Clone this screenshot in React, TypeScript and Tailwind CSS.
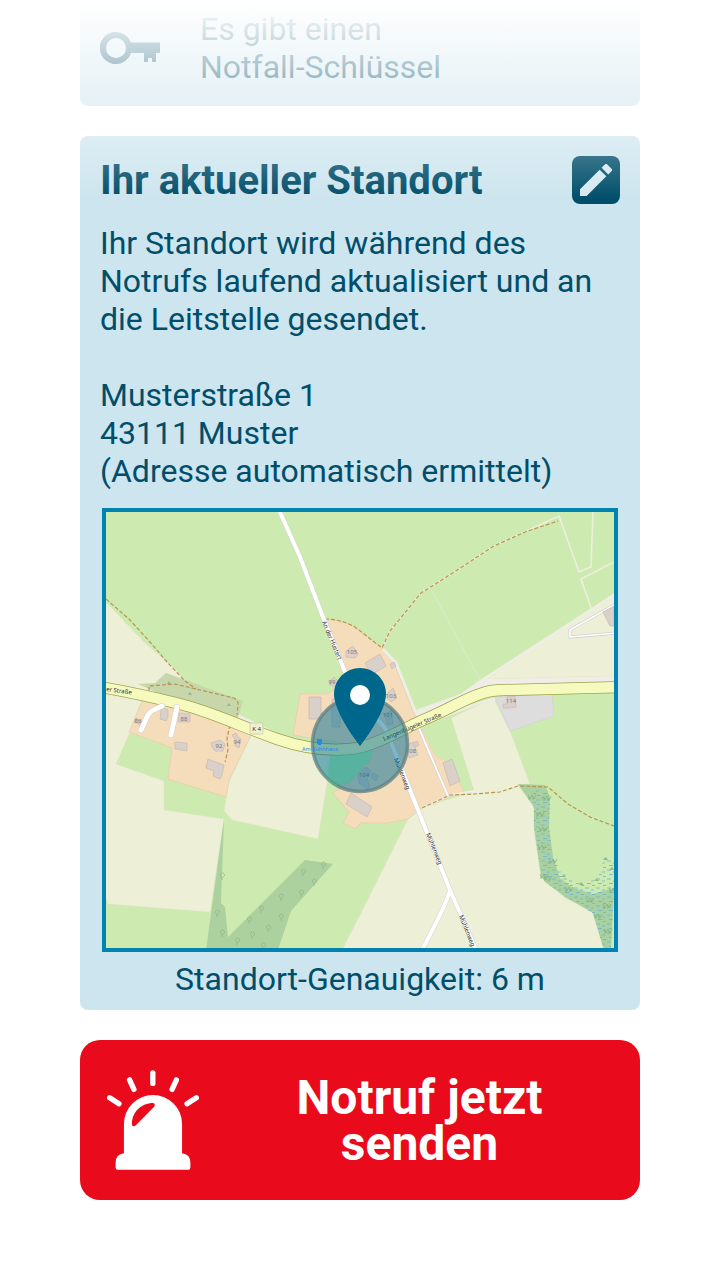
const KeyIcon = () => (
  <svg viewBox="0 0 60 32" className="w-[60px] h-8 shrink-0 fill-[#004e6a]" aria-hidden="true">
    <path
      fillRule="evenodd"
      d="M16 0a16 16 0 0 1 15 10.500H60V21h-4v9h-4v-4h-4v4h-4v-9H31A16 16 0 1 1 16 0zM16 6a10 10 0 1 0 0 20a10 10 0 0 0 0-20z"
    />
  </svg>
);

const PencilIcon = () => (
  <svg viewBox="3 3 18 18" className="size-8 fill-[#d5e8f0]" aria-hidden="true">
    <path d="M3 17.250V21h3.750L17.810 9.940l-3.750-3.750L3 17.250zM20.710 7.040a1 1 0 0 0 0-1.410l-2.340-2.340a1 1 0 0 0-1.410 0l-1.830 1.830 3.750 3.750 1.830-1.830z" />
  </svg>
);

const SirenIcon = () => (
  <svg viewBox="81 120 277 300" className="w-[92px] h-[100px] shrink-0" aria-hidden="true">
    <path
      fill="#fff"
      fillRule="evenodd"
      d="M132 370V282a87.500 87.500 0 0 1 175 0V370q25 3 25 28v16q0 6-6 6H113q-6 0-6-6v-16q0-25 25-28zM156 283q0 7 7 6l5-3 55-56q5-8-3-11C185 219 156 245 156 283z"
    />
    <path
      stroke="#fff"
      strokeWidth="16"
      strokeLinecap="round"
      d="M219 128V160M149 149L162 178M290 149L277 178M89 203L117 221M350 203L322 221"
    />
  </svg>
);

const buildings = [
  'M64 208l4 2 0 7-2 4-6-2 1-9z',
  'M79 213l11 1 0 8-12 0z',
  'M75 242l12 1 0 8-12-2z',
  'M111 243l9-3 5 4-2 7-8 0-3-4z',
  'M108 259l16 6-2 10-2 4-7-3 1-5-8-3z',
  'M132 235l4-2 2 4 3 2-2 9-4-2 1-5z',
  'M36 218l6 3-2 4-6-3z',
  'M209 197h12v22h-12z',
  'M232 199h8v28h-8z',
  'M230 181l4-4 4 4-3 6-5-2z',
  'M246 151l7-5 5 8-3 4-9-1z',
  'M265 163l15-9 6 12-15 9z',
  'M290 164l4-2 2 4-4 3z',
  'M285 196l8-8 4 10-6 4z',
  'M285 214l6-4 2 14-6 1z',
  'M307 245l6-3 4 10 1 3-9 3z',
  'M313 243l4-2 2 4-4 2z',
  'M343 263l9-4 8 22-10 5z',
  'M251 293l21 14-5 10-21-13z',
  'M258 275l8-8 5 4-4 8 3 7-3 3-8-6z',
  'M273 273l5 3-2 5-5-4z',
  'M407 197l8-1 1 11-8 1-5 0 0-4 4 0z',
  'M503 112l11-6v20l-4 0z',
];

const houseNumbers = [
  { n: '105', x: 252, y: 154 },
  { n: '99', x: 232, y: 184 },
  { n: '103', x: 291, y: 198 },
  { n: '101', x: 288, y: 217 },
  { n: '108', x: 311, y: 253 },
  { n: '104', x: 264, y: 277 },
  { n: '114', x: 411, y: 203 },
  { n: '86', x: 38, y: 223 },
  { n: '88', x: 84, y: 221 },
  { n: '92', x: 119, y: 248 },
  { n: '94', x: 137, y: 244 },
];

const trees = [
  [117, 413], [122, 433], [137, 441], [149, 420], [152, 435], [161, 409], [168, 428],
  [181, 397], [181, 417], [201, 393], [203, 372], [214, 382], [223, 365], [163, 446], [122, 376],
];

const shrubs = [
  [431, 297], [446, 298], [439, 314], [442, 329], [441, 347], [452, 361], [443, 376], [447, 378],
  [468, 389], [489, 400], [506, 406], [497, 416], [507, 431], [512, 390],
];

const MAIN_ROAD = 'M0 187C30 192 52 197 80 204C112 212 140 226 177 239C203 248 232 252 258 248C284 242 305 227 330 217C353 207 364 199 383 193Q392 190 404 190L520 187';
const SIDE_ROADS = 'M179 10L200 57L223 117L245 172L278 220Q288 230 290 240L310 290L350 390L376 450M350 390Q347 403 322 450';
const DRIVEWAYS = 'M62 206Q50 211 48 215L41 230M77 207L71 235';

const LocationMap = () => (
  <svg
    viewBox="6 12 508 436"
    className="block w-full h-auto"
    role="img"
    aria-label="Karte Ihres Standorts"
    fontFamily='"Noto Sans", sans-serif'
  >
    <defs>
      <pattern id="marsh" width="11" height="9" patternUnits="userSpaceOnUse">
        <path d="M1 1h4M7 3h3M3 5.500h4M8 7.500h3" stroke="#6db4d0" strokeWidth="0.8" />
      </pattern>
    </defs>

    {/* Land use */}
    <rect x="6" y="12" width="508" height="436" fill="#cdebb0" />
    <g fill="#edf0d6" stroke="#dfe2c8" strokeWidth="0.5">
      <path d="M6 102L45 143L72 166L90 185L70 200L0 185z" />
      <path d="M0 190L42 201L30 232L16 264L64 281V310L124 319L110 412L8 404L0 380z" />
      <path d="M152 233L180 242L231 252L227 283L218 339L132 320L124 311L129 281z" />
      <path d="M351 218L382 203L395 201L410 231L430 284L418 285L434 307V330L441 377L465 398L492 411L504 450H242L260 415L308 319L322 308L374 291z" />
      <path d="M387 179L516 92V176z" />
    </g>
    <path d="M6 181L50 191L90 204L138 214L175 232L193 238L180 242L80 210L6 193z" fill="#f0ede6" />
    <path d="M313 211L360 194L380 180L516 92V95L387 179L516 176V183L400 190L330 217L395 197V201L382 203L318 228z" fill="#f0ede6" />
    <g fill="#f5dcba" stroke="#e5c4a2" strokeWidth="0.5">
      <path d="M42 201L29 232L72 248L68 279L126 297L129 281L152 233L110 214z" />
      <path d="M225 119Q240 119 255 127L282 148Q290 154 296 168L313 211L322 228L335 255L348 262L364 291L322 308L308 319L288 323H260L256 329L243 323L249 312L233 293L250 282L270 260L272 248L193 235L200 194H227L238 187L243 174z" />
    </g>
    <path d="M322 228L335 255L348 262L364 291L374 291L351 218z" fill="#cdebb0" />
    <path d="M283 149L296 163L315 211" fill="none" stroke="#f0ede6" strokeWidth="3" />
    <path d="M38 184L55 183L66 173L143 201L138 218Q90 202 58 193z" fill="#c8d7ab" />
    <path d="M395 197L452 194L454 216L410 231z" fill="#dedddd" stroke="#d0cbd0" strokeWidth="0.5" />
    <path d="M124 319L106 450H178L191 411L233 364L205 360L128 437L125 407L121 403z" fill="#add19e" />
    <path d="M418 284L445 285L450 298L449 327L453 357L460 378L473 388L493 394L514 388L511 450H504L493 413L467 398L445 382L441 375L434 327V307z" fill="#a9d0a0" />
    <path d="M433 290L448 291L450 298L449 327L453 357L461 372L480 384L498 378L504 358L516 359L511 450H504L493 413L467 398L445 382L441 375L434 327z" fill="url(#marsh)" />

    {/* Trees and shrubs */}
    <g fill="none" stroke="#8db584" strokeWidth="0.8">
      {trees.map(([x, y]) => (
        <path key={`${x}-${y}`} d={`M${x} ${y + 4}v-3a2 2 0 1 1 1 0`} />
      ))}
    </g>
    <g fill="none" stroke="#83b582" strokeWidth="0.8">
      {shrubs.map(([x, y]) => (
        <path key={`${x}-${y}`} d={`M${x - 3} ${y - 2}l2 4 2-4 2 4 2-4M${x - 2} ${y + 3}v-3M${x + 2} ${y + 3}v-3`} />
      ))}
    </g>
    <path d="M67 184l2-3 2 3zM88 195l2-3 2 3zM127 206l2-3 2 3zM461 377l3-3 2 3zM479 385l2-3 3 3zM494 381l3-3 2 3zM503 360l3-3 2 3zM509 370l3-3 2 3z" fill="#96b886" />

    {/* Field boundaries */}
    <path d="M282 148L290 131L322 92L345 78L394 46L459 16L479 72L491 67L493 12M514 62L481 79L491 108" fill="none" stroke="#efeee3" strokeWidth="1.500" />
    <path d="M330 87L380 180" stroke="#dceccb" strokeWidth="1" />
    <path d="M516 104L470 130V137L516 133" fill="none" stroke="#d3d0d3" strokeWidth="3" />
    <path d="M516 104L470 130V137L516 133" fill="none" stroke="#fff" strokeWidth="1.500" />

    {/* Tracks */}
    <path d="M322 308L350 295L374 291" fill="none" stroke="#f1eee3" strokeWidth="2" />
    <g fill="none" stroke="#b9954b" strokeWidth="1.200" strokeDasharray="4 2">
      <path d="M6 99L30 120L50 142L67 162L85 181L96 189" />
      <path d="M49 191V186L75 184L96 189L134 198Q139 201 138 206L137 215M130 225L127 238L128 250L125 262" />
      <path d="M225 119Q240 119 255 127L282 148L290 131L321 93L345 78L394 46L425 32L458 21" />
      <path d="M322 308L350 295L374 294L400 292L418 286L448 287L468 304L490 317L514 326" />
    </g>

    {/* Buildings */}
    <g fill="#d9d0c9" stroke="#c3b5ab" strokeWidth="0.6">
      {buildings.map((d) => (
        <path key={d} d={d} />
      ))}
    </g>

    {/* Roads */}
    <g fill="none">
      <path d="M318 226L348 296" stroke="#cbc8c4" strokeWidth="3" />
      <path d="M318 226L348 296" stroke="#fff" strokeWidth="2" />
      <path d={SIDE_ROADS} stroke="#d3d2cb" strokeWidth="5" />
      <path d={SIDE_ROADS} stroke="#fff" strokeWidth="4" />
      <path d={MAIN_ROAD} stroke="#9da44b" strokeWidth="12" />
      <path d={MAIN_ROAD} stroke="#f7fabf" strokeWidth="10.500" />
      <path d={DRIVEWAYS} stroke="#d6cfc6" strokeWidth="6" strokeLinecap="round" />
      <path d={DRIVEWAYS} stroke="#fff" strokeWidth="5" strokeLinecap="round" />
    </g>

    {/* Labels */}
    <g fontSize="6" fill="#7d7674" textAnchor="middle">
      {houseNumbers.map(({ n, x, y }) => (
        <text key={n} x={x} y={y}>{n}</text>
      ))}
    </g>
    <g fontSize="6" fill="#2c2c2c">
      <text transform="translate(6 191) rotate(8)">er Straße</text>
      <text transform="translate(222 122) rotate(67)">An der Hustert</text>
      <text transform="translate(284 241) rotate(-23)">Langenbügeler Straße</text>
      <text transform="translate(294 259) rotate(68)">Mühlenweg</text>
      <text transform="translate(326 334) rotate(68)">Mühlenweg</text>
      <text transform="translate(359 416) rotate(68)">Mühlenweg</text>
    </g>
    <rect x="150" y="223" width="13" height="11" rx="1" fill="#f0f0d0" stroke="#c9c9a5" strokeWidth="0.8" />
    <text x="156.500" y="231" fontSize="6" fill="#333" textAnchor="middle">K 4</text>

    {/* Accuracy radius and pin */}
    <circle cx="260" cy="244" r="47.500" fill="#006b94" fillOpacity="0.5" stroke="#5f8080" strokeOpacity="0.75" strokeWidth="3.500" />
    <path d="M230 255L255 253L272 250L270 260L250 282L233 286L224 274z" fill="#3cc49a" fillOpacity="0.35" />
    <g fill="#2d86e0">
      <path d="M217 239h5v5h-1v1h-3v-1h-1z" />
      <text x="220" y="251" fontSize="5.500" textAnchor="middle">Am Kuhnhaus</text>
    </g>
    <path
      fill="#00678c"
      fillRule="evenodd"
      d="M260 168c-14.400 0-26 11.600-26 26c0 19.500 26 52 26 52s26-32.500 26-52c0-14.400-11.600-26-26-26z"
    />
    <circle cx="260" cy="195" r="10" fill="#fff" />
  </svg>
);

const App = () => {
  return (
    <div className="relative bg-white px-20 pb-20 font-[Roboto,sans-serif] text-[#004e6a]">
      <main className="flex flex-col gap-[30px]">
        <section className="flex items-center gap-10 rounded-b-lg bg-[#cde5ee] px-5 pt-2.5 pb-5">
          <KeyIcon />
          <p className="text-[32px] leading-[38px]">
            Es gibt einen
            <br />
            Notfall-Schlüssel
          </p>
        </section>

        <section className="rounded-lg bg-[#cde5ee] px-5 pt-5 pb-3">
          <div className="flex items-end justify-between">
            <h2 className="text-[40px] leading-[46px] font-bold">Ihr aktueller Standort</h2>
            <button
              type="button"
              aria-label="Standort bearbeiten"
              className="flex size-12 shrink-0 items-center justify-center rounded-lg bg-[#004e6a]"
            >
              <PencilIcon />
            </button>
          </div>

          <div className="mt-5 text-[32px] leading-[38px]">
            <p>Ihr Standort wird während des Notrufs laufend aktualisiert und an die Leitstelle gesendet.</p>
            <address className="mt-[38px] not-italic">
              Musterstraße 1
              <br />
              43111 Muster
              <br />
              (Adresse automatisch ermittelt)
            </address>
          </div>

          <div className="mx-0.5 mt-[18px] border-4 border-[#0083b0]">
            <LocationMap />
          </div>
          <p className="mt-2 text-center text-[32px] leading-[38px]">Standort-Genauigkeit: 6 m</p>
        </section>

        <button
          type="button"
          className="flex min-h-40 items-center rounded-[20px] bg-[#e90b1b] pl-[27px] text-white"
        >
          <SirenIcon />
          <span className="flex-1 px-20 pt-0.5 text-center text-[48px] leading-[46px] font-bold">
            Notruf jetzt senden
          </span>
        </button>
      </main>

      <div className="pointer-events-none absolute inset-x-0 top-0 h-[200px] bg-linear-to-b from-white to-transparent" />
    </div>
  );
};

export default App;
